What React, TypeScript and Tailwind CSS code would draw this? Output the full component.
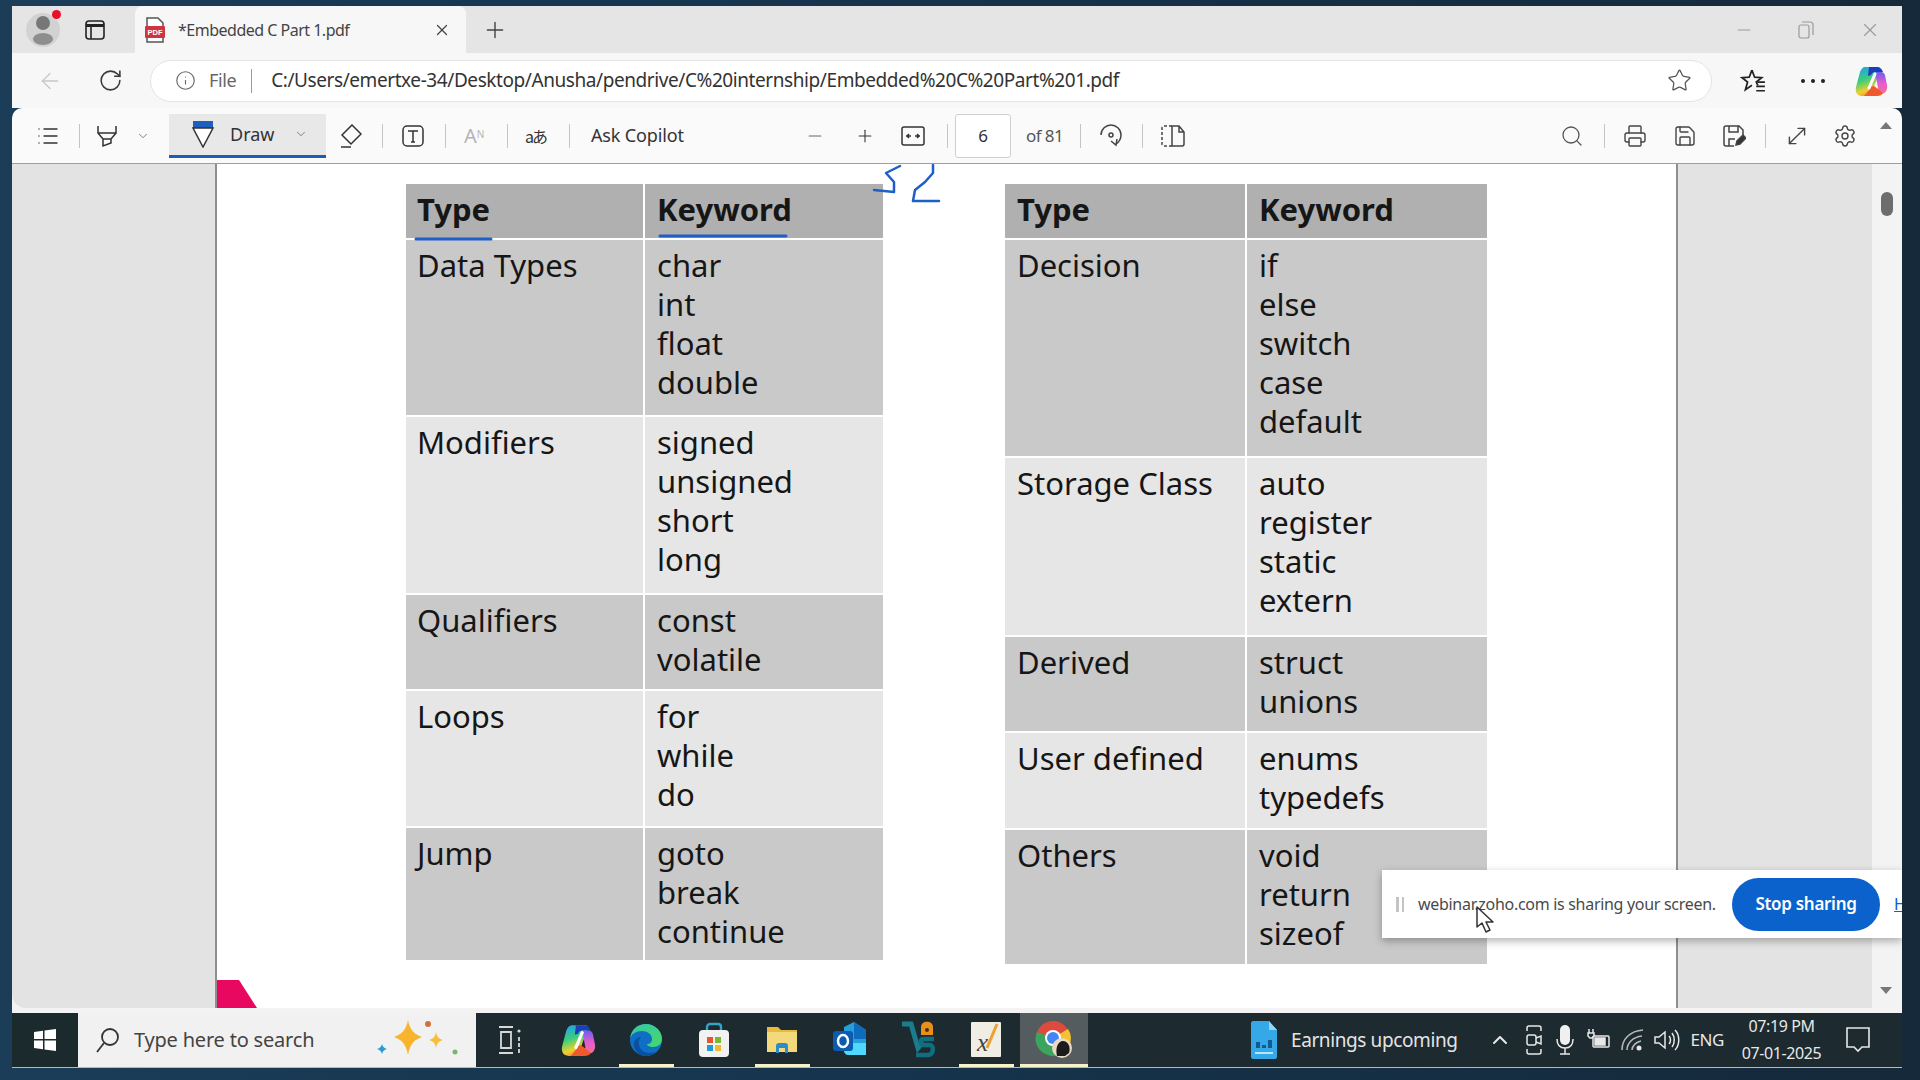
import React from "react";
import {
  ArrowLeft,
  ChevronDown,
  ChevronUp,
  Info,
  List,
  Minus,
  Plus,
  RotateCw,
  Search,
  Settings,
  Star,
  X,
  MoveDiagonal,
  Printer,
  Save,
} from "lucide-react";

type Row = { type: string; words: string[]; tone: string; height: string };

const leftRows: Row[] = [
  { type: "Data Types", words: ["char", "int", "float", "double"], tone: "bg-[#c9c9c9]", height: "h-[175px]" },
  { type: "Modifiers", words: ["signed", "unsigned", "short", "long"], tone: "bg-[#e6e6e6]", height: "h-[176px]" },
  { type: "Qualifiers", words: ["const", "volatile"], tone: "bg-[#c9c9c9]", height: "h-[94px]" },
  { type: "Loops", words: ["for", "while", "do"], tone: "bg-[#e6e6e6]", height: "h-[135px]" },
  { type: "Jump", words: ["goto", "break", "continue"], tone: "bg-[#c9c9c9]", height: "h-[132px]" },
];

const rightRows: Row[] = [
  { type: "Decision", words: ["if", "else", "switch", "case", "default"], tone: "bg-[#c9c9c9]", height: "h-[216px]" },
  { type: "Storage Class", words: ["auto", "register", "static", "extern"], tone: "bg-[#e6e6e6]", height: "h-[177px]" },
  { type: "Derived", words: ["struct", "unions"], tone: "bg-[#c9c9c9]", height: "h-[94px]" },
  { type: "User defined", words: ["enums", "typedefs"], tone: "bg-[#e6e6e6]", height: "h-[95px]" },
  { type: "Others", words: ["void", "return", "sizeof"], tone: "bg-[#c9c9c9]", height: "h-[134px]" },
];

const KeywordTable = ({ rows, cols, firstPad }: { rows: Row[]; cols: string; firstPad: string }) => (
  <div className={`grid gap-[2px] text-[31px] leading-[39px] text-[#161616] ${cols}`}>
    <div className={`h-[54px] bg-[#b0b0b0] pt-[6px] font-bold ${firstPad}`}>Type</div>
    <div className="h-[54px] bg-[#b0b0b0] pl-[12px] pt-[6px] font-bold">Keyword</div>
    {rows.map((row) => (
      <React.Fragment key={row.type}>
        <div className={`${row.tone} ${row.height} ${firstPad} pt-[6px]`}>{row.type}</div>
        <div className={`${row.tone} ${row.height} pl-[12px] pt-[6px]`}>
          {row.words.map((w) => (
            <div key={w}>{w}</div>
          ))}
        </div>
      </React.Fragment>
    ))}
  </div>
);

const Sep = ({ ml }: { ml: string }) => <div className={`h-[24px] w-px shrink-0 bg-[#c4c4c4] ${ml}`} />;

const PdfIcon = () => (
  <svg width="20" height="26" viewBox="0 0 20 26" className="shrink-0">
    <path d="M2 1h11l5 5v19H2z" fill="#fff" stroke="#555" strokeWidth="1.5" />
    <rect x="0" y="9" width="20" height="12" rx="1" fill="#d1343c" />
    <text x="10" y="18" textAnchor="middle" fontSize="7.5" fontWeight="700" fill="#fff" fontFamily="Liberation Sans">PDF</text>
  </svg>
);

const Avatar = () => (
  <div className="relative flex h-[34px] w-[34px] items-center justify-center rounded-full bg-[#d2d2d2]">
    <svg width="24" height="30" viewBox="0 0 24 30">
      <circle cx="12" cy="8" r="7" fill="#777" />
      <ellipse cx="12" cy="24" rx="10" ry="6" fill="#8d8d8d" />
    </svg>
    <div className="absolute right-[-1px] top-[-3px] h-[9px] w-[9px] rounded-full bg-[#e8102a]" />
  </div>
);

const CopilotLogo = ({ id, size = 34 }: { id: string; size?: number }) => (
  <svg width={size} height={size} viewBox="0 0 34 34">
    <defs>
      <linearGradient id={`${id}A`} x1="0.2" y1="0" x2="0.5" y2="1">
        <stop offset="0" stopColor="#22a0ec" />
        <stop offset="0.45" stopColor="#3ccf78" />
        <stop offset="0.8" stopColor="#f2cf30" />
        <stop offset="1" stopColor="#f09030" />
      </linearGradient>
      <linearGradient id={`${id}B`} x1="0.5" y1="0" x2="0.5" y2="1">
        <stop offset="0" stopColor="#6a5cf0" />
        <stop offset="0.5" stopColor="#e45cd0" />
        <stop offset="1" stopColor="#f6708c" />
      </linearGradient>
    </defs>
    <path d="M11 3h12c3 0 4 2 3 4l-8 21c-1 3-3 4-6 4H8c-5 0-7-4-6-9L6 8c1-3 3-5 5-5z" fill={`url(#${id}A)`} />
    <path d="M15 3h8c3 0 5 2 6 5h-8c-2 0-3 1-4 3l-3 1z" fill="#1a3fb8" />
    <path d="M21 8h6c2 0 3 1 4 3l2 10c1 5-2 9-6 9h-7c2-2 3-4 4-6z" fill={`url(#${id}B)`} />
    <path d="M10 32h13c3 0 5-1 6-3l-9-7c-2 0-3 1-4 3z" fill="#ee5a2c" />
    <path d="M21 10l-6 14" stroke="#fff" strokeWidth="3" strokeLinecap="round" />
  </svg>
);

const Win = () => (
  <svg width="24" height="24" viewBox="0 0 24 24" fill="#fff">
    <path d="M1 4l9-1.3V11H1zM11.500 2.500L23 1v10H11.500zM1 12.500h9v8.800L1 20zM11.500 12.500H23V23l-11.500-1.600z" />
  </svg>
);

const Sparkles = () => (
  <svg width="84" height="44" viewBox="0 0 84 44">
    <path d="M32 2c2 10 6 14 14 17-8 3-12 7-14 18-2-11-6-15-14-18 8-3 12-7 14-17z" fill="#f7b42c" />
    <path d="M60 14c1 5 3 7 7 8-4 1-6 3-7 8-1-5-3-7-7-8 4-1 6-3 7-8z" fill="#f8bf3c" />
    <path d="M6 26c1 3 2 4 5 5-3 1-4 2-5 5-1-3-2-4-5-5 3-1 4-2 5-5z" fill="#2a9bd8" />
    <circle cx="52" cy="6" r="3" fill="#d5703c" />
    <circle cx="79" cy="34" r="2.500" fill="#7cb56a" />
  </svg>
);

const TaskView = () => (
  <svg width="26" height="30" viewBox="0 0 26 30" fill="none" stroke="#d8d8d8" strokeWidth="1.800">
    <path d="M2 2h14M2 28h14M4 7h10v16H4z" />
    <circle cx="22" cy="6" r="1.600" fill="#d8d8d8" stroke="none" />
    <path d="M22 12v16" strokeDasharray="4 2" />
  </svg>
);

const Edge = () => (
  <svg width="34" height="34" viewBox="0 0 34 34">
    <defs>
      <linearGradient id="edA" x1="0" y1="0" x2="1" y2="1">
        <stop offset="0" stopColor="#36c6a8" />
        <stop offset="1" stopColor="#45d86a" />
      </linearGradient>
    </defs>
    <circle cx="17" cy="17" r="16" fill="#0f6fc4" />
    <path d="M1 16C2 6 9 1 17 1c9 0 16 7 16 15 0 5-4 8-9 8-4 0-6-2-6-3 3 0 5-2 5-5 0-5-5-8-10-8-6 0-11 3-12 8z" fill="url(#edA)" />
    <path d="M17 33c-7 0-13-6-12-14 1-3 4-5 7-5-2 2-3 5-2 8 1 5 5 8 10 8 3 0 5-1 6-1-3 3-6 4-9 4z" fill="#0b4fa0" />
  </svg>
);

const Store = () => (
  <svg width="34" height="36" viewBox="0 0 34 36">
    <path d="M10 8V5c0-2 2-3 3-3h8c2 0 3 1 3 3v3" fill="none" stroke="#2ea6c8" strokeWidth="2.400" />
    <rect x="2" y="8" width="30" height="27" rx="4" fill="#f2f2f2" />
    <rect x="10" y="15" width="6" height="6" fill="#e8562c" />
    <rect x="18" y="15" width="6" height="6" fill="#7cb82c" />
    <rect x="10" y="23" width="6" height="6" fill="#1e9ad8" />
    <rect x="18" y="23" width="6" height="6" fill="#f5b92c" />
  </svg>
);

const Files = () => (
  <svg width="32" height="32" viewBox="0 0 32 32">
    <path d="M1 3h11l3 3h16v22H1z" fill="#e8b93c" />
    <path d="M1 8h30v20H1z" fill="#f4d97c" />
    <path d="M10 29v-7c0-2 1-3 3-3h6c2 0 3 1 3 3v7h-3v-5h-6v5z" fill="#2b8cc8" />
  </svg>
);

const Outlook = () => (
  <svg width="36" height="38" viewBox="0 0 36 38">
    <path d="M12 6l10-5 12 8v22H12z" fill="#26a0dc" />
    <path d="M22 1l12 8v9H22z" fill="#0f6cbd" />
    <path d="M12 22h22v12H16c-2 0-4-2-4-4z" fill="#50d9ff" />
    <rect x="1" y="10" width="20" height="20" rx="3" fill="#0a5cb0" />
    <ellipse cx="11" cy="20" rx="5" ry="6" fill="none" stroke="#fff" strokeWidth="2.500" />
  </svg>
);

const Vs = () => (
  <svg width="36" height="38" viewBox="0 0 36 38" fill="none">
    <path d="M2 3h9l7 24 4-5" stroke="#1a7c8c" strokeWidth="5" />
    <path d="M34 18H23c-3 0-3 6 1 6h6c4 0 4 10-2 10H16" stroke="#0f6f80" strokeWidth="4.500" />
    <path d="M21 6c0-7 12-7 12 0v8H21z" fill="#e88f1c" />
    <circle cx="27" cy="9" r="2" fill="#4a3112" />
  </svg>
);

const Xournal = () => (
  <svg width="30" height="36" viewBox="0 0 30 36">
    <rect width="30" height="35" rx="1" fill="#f0ede4" />
    <path d="M26 2L16 26" stroke="#f0a030" strokeWidth="3" />
    <text x="6" y="29" fontFamily="Liberation Serif" fontStyle="italic" fontSize="25" fill="#444">x</text>
  </svg>
);

const Chrome = () => (
  <svg width="38" height="40" viewBox="0 0 38 40">
    <circle cx="18" cy="18" r="17" fill="#dd4b3e" />
    <path d="M18 18L33 9a17 17 0 0 1-10 26z" fill="#f4c430" />
    <path d="M18 18l5 17A17 17 0 0 1 2 12z" fill="#3ba55d" />
    <circle cx="18" cy="18" r="8" fill="#fff" />
    <circle cx="18" cy="18" r="6" fill="#4285f4" />
    <circle cx="27" cy="28" r="10" fill="#e8d8c4" />
    <path d="M22 36c-2-8 1-15 6-15s8 6 6 12l-4 3z" fill="#1b1b1b" />
  </svg>
);

const Widget = () => (
  <svg width="28" height="40" viewBox="0 0 28 40">
    <path d="M1 3c0-1 1-2 2-2h16l8 9v27c0 1-1 2-2 2H3c-1 0-2-1-2-2z" fill="#35a8e8" />
    <path d="M19 1l8 9h-8z" fill="#8fd6f8" />
    <path d="M6 22h4v6H6zM12 25h4v3h-4zM18 20h4v8h-4z" fill="#14598f" />
    <path d="M5 32h18v2H5z" fill="#b8e4f8" />
  </svg>
);

const Tray = () => (
  <div className="flex items-center text-[#e8e8e8]">
    <ChevronUp size={24} strokeWidth={2} className="ml-[30px] shrink-0" />
    <svg className="ml-[12px] shrink-0" width="20" height="30" viewBox="0 0 20 30" fill="none" stroke="#e8e8e8" strokeWidth="1.500">
      <path d="M3 6V3c0-1 1-2 2-2h10c1 0 2 1 2 2v3M3 24v3c0 1 1 2 2 2h10c1 0 2-1 2-2v-3" />
      <rect x="3" y="10" width="9" height="10" rx="2" />
      <path d="M12 13l5-2v8l-5-2" />
    </svg>
    <svg className="ml-[12px] shrink-0" width="18" height="32" viewBox="0 0 18 32">
      <rect x="4" y="1" width="10" height="20" rx="5" fill="#f0f0f0" />
      <path d="M1 15c0 6 3 9 8 9s8-3 8-9M9 24v6M4 30h10" fill="none" stroke="#e8e8e8" strokeWidth="1.500" />
    </svg>
    <svg className="ml-[13px] shrink-0" width="24" height="24" viewBox="0 0 24 24" fill="none" stroke="#e8e8e8" strokeWidth="1.500">
      <rect x="6" y="8" width="16" height="11" rx="1" />
      <rect x="8" y="10" width="10" height="7" fill="#e8e8e8" />
      <path d="M2 1v4M6 1v4M1 5h6v3l-2 2H3L1 8z" />
    </svg>
    <svg className="ml-[10px] shrink-0" width="24" height="24" viewBox="0 0 24 24" fill="none" stroke="#b8b8b8" strokeWidth="1.600">
      <path d="M1 22C1 11 9 3 22 2M6 22c0-7 6-13 15-14M11 22c0-4 4-8 9-9" />
      <circle cx="18" cy="20" r="2.500" fill="#e8e8e8" stroke="none" />
    </svg>
    <svg className="ml-[9px] shrink-0" width="26" height="24" viewBox="0 0 26 24" fill="none" stroke="#e8e8e8" strokeWidth="1.500">
      <path d="M1 9v6h4l6 5V4L5 9z" />
      <path d="M15 8c2 2 2 6 0 8M18 5c3 4 3 10 0 14M21 2c5 5 5 15 0 20" />
    </svg>
    <span className="ml-[11px] w-[34px] shrink-0 text-[17px] tracking-[-0.5px]">ENG</span>
    <div className="ml-[15px] w-[84px] shrink-0 whitespace-nowrap text-center text-[16px] leading-[27px] tracking-[-0.4px]">
      <div>07:19 PM</div>
      <div>07-01-2025</div>
    </div>
    <svg className="ml-[22px] shrink-0" width="24" height="26" viewBox="0 0 24 26" fill="none" stroke="#e8e8e8" strokeWidth="1.600">
      <path d="M1 1h22v19h-7l-4 4-4-4H1z" />
    </svg>
  </div>
);

const AppSlot = ({ children, bar, active }: { children: React.ReactNode; bar?: boolean; active?: boolean }) => (
  <div className={`relative flex h-full w-[68px] shrink-0 items-center justify-center ${active ? "bg-[#545c5f]" : ""}`}>
    {children}
    {bar && (
      <div className={`absolute bottom-0 h-[3px] bg-[#f6f3c8] ${active ? "w-full" : "w-[55px]"}`} />
    )}
  </div>
);

export default function App() {
  return (
    <div
      className="h-[1080px] w-[1920px] overflow-hidden bg-gradient-to-r from-[#1b3d58] via-[#15334b] to-[#15293a] pl-[12px] pr-[18px] pt-[6px]"
      style={{ fontFamily: '"Noto Sans", sans-serif' }}
    >
      {/* tab strip */}
      <div className="flex h-[47px] items-center bg-[#e5e5e5] text-[#333]">
        <div className="ml-[14px]">
          <Avatar />
        </div>
        <svg className="ml-[25px]" width="20" height="20" viewBox="0 0 20 20" fill="none" stroke="#222" strokeWidth="1.600">
          <rect x="1" y="1" width="18" height="18" rx="3" />
          <path d="M1 5.500h18" strokeWidth="3" />
          <path d="M6 6v13" />
        </svg>
        <div className="ml-[30px] flex h-full w-[331px] items-center rounded-t-[8px] bg-[#f7f7f7] pl-[10px]">
          <PdfIcon />
          <span className="ml-[13px] w-[255px] text-[16px] tracking-[-0.5px] text-[#444]">*Embedded C Part 1.pdf</span>
          <X size={18} strokeWidth={1.600} className="text-[#444]" />
        </div>
        <Plus size={26} strokeWidth={1.300} className="ml-[16px] text-[#444]" />
        <div className="ml-auto flex items-center text-[#9a9a9a]">
          <Minus size={20} strokeWidth={1.200} />
          <svg className="ml-[44px]" width="16" height="18" viewBox="0 0 16 18" fill="none" stroke="#9a9a9a" strokeWidth="1.200">
            <rect x="1" y="4" width="10" height="13" rx="2" />
            <path d="M4 1h8c2 0 3 1 3 3v10" />
          </svg>
          <X size={22} strokeWidth={1.200} className="ml-[45px] mr-[21px]" />
        </div>
      </div>

      {/* address bar */}
      <div className="flex h-[55px] items-center bg-[#f7f7f7] text-[#3b3b3b]">
        <ArrowLeft size={26} strokeWidth={1.200} className="ml-[25px] text-[#c8c8c8]" />
        <RotateCw size={25} strokeWidth={1.500} className="ml-[35px]" />
        <div className="ml-[27px] flex h-[42px] w-[1562px] items-center rounded-full border border-[#e4e4e4] bg-white">
          <Info size={21} strokeWidth={1.300} className="ml-[24px] text-[#666]" />
          <span className="ml-[13px] text-[18px] tracking-[-0.4px] text-[#666]">File</span>
          <div className="ml-[15px] h-[24px] w-px bg-[#999]" />
          <span className="ml-[19px] text-[19px] tracking-[-0.42px] text-[#333]">
            C:/Users/emertxe-34/Desktop/Anusha/pendrive/C%20internship/Embedded%20C%20Part%201.pdf
          </span>
          <Star size={25} strokeWidth={1.200} className="ml-auto mr-[19px] text-[#555]" />
        </div>
        <svg className="ml-[28px]" width="26" height="26" viewBox="0 0 24 24" fill="none" stroke="#222" strokeWidth="1.600">
          <path d="M11 2l2.500 6.500L20 9l-5 4 1.500 3M11 2L8.500 8.500 2 9l5 4-2 7 6-4" />
          <path d="M16 13h7M15 17h8M15 21h8" />
        </svg>
        <div className="ml-[35px] flex w-[24px] justify-between">
          <div className="h-[4px] w-[4px] rounded-full bg-[#222]" />
          <div className="h-[4px] w-[4px] rounded-full bg-[#222]" />
          <div className="h-[4px] w-[4px] rounded-full bg-[#222]" />
        </div>
        <div className="ml-[29px]">
          <CopilotLogo id="cpTop" />
        </div>
      </div>

      {/* pdf toolbar */}
      <div className="flex h-[56px] items-center rounded-t-[10px] border-b border-[#9e9e9e] bg-[#fafafa] text-[#333]">
        <List size={24} strokeWidth={1.400} className="ml-[24px] text-[#333]" />
        <Sep ml="ml-[19px]" />
        <svg className="ml-[15px]" width="24" height="24" viewBox="0 0 24 24" fill="none" stroke="#333" strokeWidth="1.500">
          <path d="M3 2v7h18V2M3 9l5 6h8l5-6M8 15v7l8-3v-4" />
        </svg>
        <ChevronDown size={14} strokeWidth={1.400} className="ml-[17px] text-[#666]" />
        <div className="ml-[19px] flex h-[44px] w-[157px] items-center border-b-[3px] border-[#1760b8] bg-[#e8e8e8]">
          <svg className="ml-[22px]" width="24" height="28" viewBox="0 0 24 28">
            <path d="M2 1h20v7H2z" fill="#1d5fbf" />
            <path d="M2 8h20l-10 19z" fill="#fff" stroke="#333" strokeWidth="1.500" />
          </svg>
          <span className="ml-[15px] text-[18px] text-[#333]">Draw</span>
          <ChevronDown size={14} strokeWidth={1.400} className="ml-[20px] text-[#666]" />
        </div>
        <svg className="ml-[12px]" width="24" height="24" viewBox="0 0 24 24" fill="none" stroke="#333" strokeWidth="1.500">
          <path d="M14 1l9 9-10 10-9-9zM4 11l9 9M3 23h10" />
        </svg>
        <Sep ml="ml-[20px]" />
        <svg className="ml-[19px]" width="22" height="22" viewBox="0 0 22 22" fill="none" stroke="#333" strokeWidth="1.500">
          <rect x="1" y="1" width="20" height="20" rx="4" />
          <path d="M6 6h10M11 6v11M9 17h4" />
        </svg>
        <Sep ml="ml-[21px]" />
        <span className="ml-[18px] w-[24px] text-[20px] text-[#b4b4b4]">A<sup className="text-[10px]">N</sup></span>
        <Sep ml="ml-[19px]" />
        <span className="ml-[17px] w-[24px] text-[16px] tracking-[-2px] text-[#333]" style={{ fontFamily: '"Noto Sans CJK JP", sans-serif' }}>
          aあ
        </span>
        <Sep ml="ml-[20px]" />
        <span className="ml-[21px] w-[98px] whitespace-nowrap text-[18px] tracking-[-0.15px] text-[#333]">Ask Copilot</span>
        <Minus size={20} strokeWidth={1.300} className="ml-[116px] text-[#666]" />
        <Plus size={20} strokeWidth={1.300} className="ml-[30px]" />
        <svg className="ml-[26px]" width="24" height="20" viewBox="0 0 24 20" fill="none" stroke="#333" strokeWidth="1.500">
          <rect x="1" y="1" width="22" height="18" rx="2" />
          <path d="M5 10h5M8 8l-2 2 2 2M19 10h-5M16 8l2 2-2 2" />
        </svg>
        <Sep ml="ml-[22px]" />
        <div className="ml-[7px] flex h-[44px] w-[56px] items-center justify-center rounded-[3px] border border-[#cfcfcf] bg-white text-[17px]">6</div>
        <span className="ml-[15px] w-[37px] whitespace-nowrap text-[17px] tracking-[-0.6px] text-[#555]">of 81</span>
        <Sep ml="ml-[17px]" />
        <svg className="ml-[18px]" width="24" height="26" viewBox="0 0 24 26" fill="none" stroke="#444" strokeWidth="1.500">
          <path d="M2 12C2 6 7 2 12 2s10 4 10 10c0 4-2 7-5 9" />
          <path d="M12 18l5 4 1-6" />
          <circle cx="12" cy="12" r="2" />
        </svg>
        <Sep ml="ml-[19px]" />
        <svg className="ml-[18px]" width="24" height="22" viewBox="0 0 24 22" fill="none" stroke="#444" strokeWidth="1.500">
          <path d="M11 1H3c-1 0-2 1-2 2v16c0 1 1 2 2 2h8" strokeDasharray="3 2" />
          <path d="M11 1h7l5 6v12c0 1-1 2-2 2H11zM18 1v6h5" />
        </svg>
        <Search size={24} strokeWidth={1.300} className="ml-auto text-[#555]" />
        <Sep ml="ml-[20px]" />
        <Printer size={24} strokeWidth={1.400} className="ml-[18px] text-[#444]" />
        <Save size={24} strokeWidth={1.400} className="ml-[26px] text-[#444]" />
        <svg className="ml-[25px]" width="24" height="24" viewBox="0 0 24 24" fill="none" stroke="#444" strokeWidth="1.500">
          <path d="M12 22H4c-1 0-2-1-2-2V4c0-1 1-2 2-2h13l4 4v5M7 2v6h9V2M7 22v-7h6" />
          <path d="M14 21l1-4 6-6 3 3-6 6z" fill="#333" />
        </svg>
        <Sep ml="ml-[19px]" />
        <MoveDiagonal size={26} strokeWidth={1.300} className="ml-[18px] text-[#444]" />
        <Settings size={24} strokeWidth={1.400} className="ml-[23px] text-[#444]" />
        <div className="ml-[23px] mr-[10px] h-0 w-0 -translate-y-[10px] border-x-[6px] border-b-[7px] border-x-transparent border-b-[#777]" />
      </div>

      {/* document viewport */}
      <div className="relative flex h-[844px] overflow-hidden bg-[#f3f3f3]">
        <div className="flex w-[1860px] shrink-0 rounded-bl-[14px] bg-[#e3e3e3] pl-[203px]">
          <div className="relative flex h-full w-[1463px] items-start gap-[122px] border-x-2 border-[#8f8f8f] bg-white pl-[189px] pt-[20px]">
            <KeywordTable rows={leftRows} cols="grid-cols-[237px_238px]" firstPad="pl-[11px]" />
            <KeywordTable rows={rightRows} cols="grid-cols-[240px_240px]" firstPad="pl-[12px]" />
            <div className="absolute bottom-0 left-0 h-[28px] w-[40px] bg-[#e8085f] [clip-path:polygon(0_0,55%_0,100%_100%,0_100%)]" />
            {/* pen annotations */}
            <svg className="absolute left-0 top-0" width="800" height="90" fill="none" stroke="#1f5fc8" strokeLinecap="round" strokeLinejoin="round">
              <path d="M199 75h75" strokeWidth="3" />
              <path d="M443 72h126" strokeWidth="3" />
              <path d="M683 2l-14 7 8 9v10l-20-2M716 1v8l-8 9-10 8-2 11h26" strokeWidth="2.500" />
            </svg>
          </div>
        </div>
        {/* scrollbar */}
        <div className="flex flex-1 flex-col items-center pt-[28px]">
          <div className="h-[24px] w-[12px] rounded-full bg-[#6d6d6d]" />
          <div className="ml-[-2px] mt-auto mb-[14px] h-0 w-0 border-x-[6px] border-t-[7px] border-x-transparent border-t-[#777]" />
        </div>

        {/* screen share bar */}
        <div className="absolute right-0 top-[706px] flex h-[68px] w-[520px] items-center overflow-hidden bg-white shadow-[0_3px_8px_rgba(0,0,0,0.3)]">
          <div className="ml-[14px] flex shrink-0 gap-[3px]">
            <div className="h-[15px] w-[2.500px] bg-[#c4c4c4]" />
            <div className="h-[15px] w-[2.500px] bg-[#c4c4c4]" />
          </div>
          <span className="ml-[14px] w-[300px] shrink-0 whitespace-nowrap text-[16px] tracking-[-0.3px] text-[#4a4a4a]">webinar.zoho.com is sharing your screen.</span>
          <div className="ml-[14px] flex h-[53px] w-[148px] shrink-0 items-center justify-center rounded-full bg-[#0b62cc] text-[17px] font-semibold tracking-[-0.3px] text-white">
            Stop sharing
          </div>
          <span className="ml-[14px] shrink-0 text-[16px] text-[#0b62cc] underline">Hide</span>
          <svg className="absolute left-[93px] top-[36px]" width="20" height="28" viewBox="0 0 20 28">
            <path d="M2 1v20l5-4 4 9 4-2-4-8h7z" fill="#fff" stroke="#333" strokeWidth="1.500" strokeLinejoin="round" />
          </svg>
        </div>
      </div>

      {/* strip between viewport and taskbar */}
      <div className="h-[5px] bg-[#f3f3f3]" />

      {/* windows taskbar */}
      <div className="flex h-[55px] items-center border-b border-[#b8b8b8] bg-[#1d2a30]">
        <div className="flex h-full w-[66px] shrink-0 items-center justify-center bg-[#1b2a2c]">
          <Win />
        </div>
        <div className="flex h-full w-[398px] shrink-0 items-center bg-[#f1f1f1] text-[#444]">
          <svg className="ml-[18px]" width="24" height="26" viewBox="0 0 24 26" fill="none" stroke="#333" strokeWidth="1.800">
            <circle cx="14" cy="10" r="8" />
            <path d="M8 16l-7 9" />
          </svg>
          <span className="ml-[14px] w-[242px] text-[20px] tracking-[-0.2px]">Type here to search</span>
          <Sparkles />
        </div>
        <AppSlot>
          <TaskView />
        </AppSlot>
        <AppSlot>
          <CopilotLogo id="cpBar" size={36} />
        </AppSlot>
        <AppSlot bar>
          <Edge />
        </AppSlot>
        <AppSlot>
          <Store />
        </AppSlot>
        <AppSlot bar>
          <Files />
        </AppSlot>
        <AppSlot>
          <Outlook />
        </AppSlot>
        <AppSlot>
          <Vs />
        </AppSlot>
        <AppSlot bar>
          <Xournal />
        </AppSlot>
        <AppSlot bar active>
          <Chrome />
        </AppSlot>
        <div className="ml-[162px] shrink-0">
          <Widget />
        </div>
        <span className="ml-[13px] shrink-0 whitespace-nowrap text-[19px] tracking-[-0.4px] text-[#e4e4e4]">Earnings upcoming</span>
        <Tray />
      </div>
    </div>
  );
}
